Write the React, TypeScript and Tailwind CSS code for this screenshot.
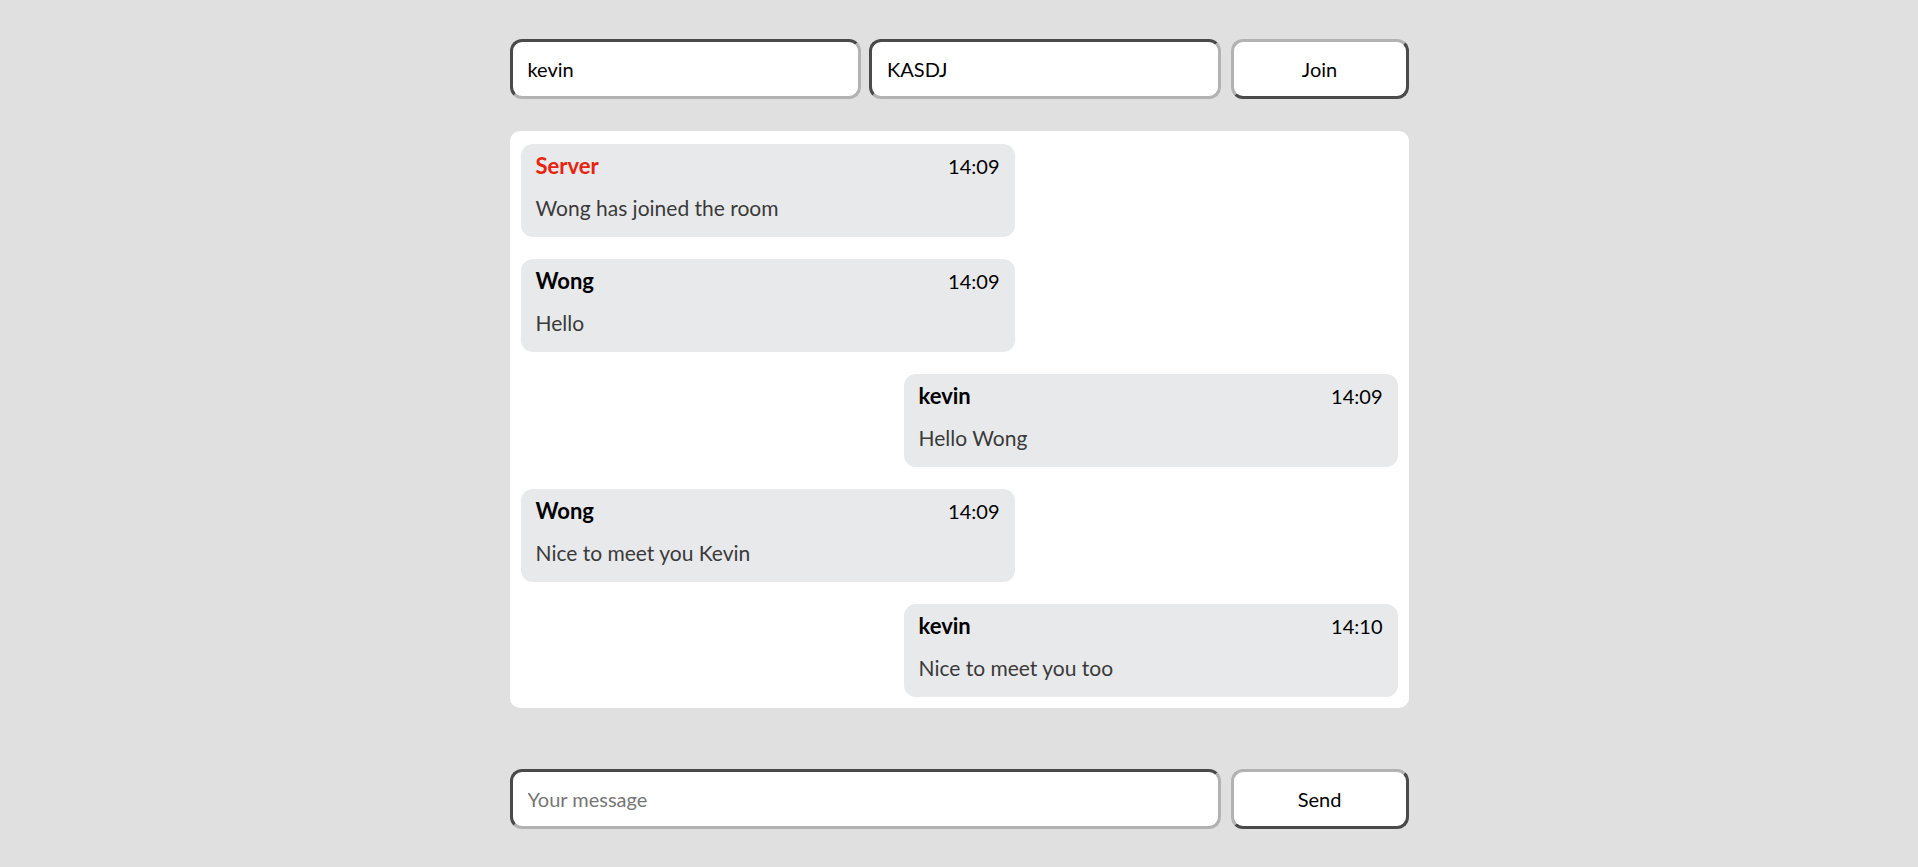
import React from "react";

type Msg = { author: string; time: string; text: string; mine?: boolean; server?: boolean };

const messages: Msg[] = [
  { author: "Server", time: "14:09", text: "Wong has joined the room", server: true },
  { author: "Wong", time: "14:09", text: "Hello" },
  { author: "kevin", time: "14:09", text: "Hello Wong", mine: true },
  { author: "Wong", time: "14:09", text: "Nice to meet you Kevin" },
  { author: "kevin", time: "14:10", text: "Nice to meet you too", mine: true },
];

const inputCls =
  "h-[60px] rounded-[12px] border-[3px] border-t-[#4a4a4a] border-l-[#4a4a4a] border-b-[#b2b2b2] border-r-[#b2b2b2] bg-white px-[15px] text-[20px] text-black outline-none placeholder:text-[#767676]";
const buttonCls =
  "h-[60px] w-[178px] shrink-0 rounded-[12px] border-[3px] border-t-[#b2b2b2] border-l-[#b2b2b2] border-b-[#4a4a4a] border-r-[#4a4a4a] bg-white text-[20px] text-black";

const Bubble = ({ m }: { m: Msg }) => (
  <div className={`flex ${m.mine ? "justify-end" : "justify-start"}`}>
    <div className="h-[93px] w-[494px] rounded-[12px] bg-[#e8e9eb] px-[15px] pt-[5px]">
      <div className="flex items-center justify-between">
        <span
          className={`text-[22px] font-bold ${m.server ? "text-[#e8230f]" : "text-black"}`}
        >
          {m.author}
        </span>
        <span className="text-[20px] text-black">{m.time}</span>
      </div>
      <p className="mt-[10px] text-[21px] text-[#3a3a3a]">{m.text}</p>
    </div>
  </div>
);

export default function App() {
  return (
    <div
      className="min-h-screen w-full bg-[#e0e0e0]"
      style={{ fontFamily: "Lato, 'Open Sans', sans-serif" }}
    >
      <div className="mx-auto flex w-[899px] flex-col pt-[39px]">
        {/* Join row */}
        <div className="flex gap-2">
          <input className={`${inputCls} min-w-0 flex-1`} defaultValue="kevin" />
          <input className={`${inputCls} min-w-0 flex-1`} defaultValue="KASDJ" />
          <button className={`${buttonCls} ml-[2px]`}>Join</button>
        </div>

        {/* Chat */}
        <div className="mt-[32px] flex h-[577px] flex-col gap-[22px] rounded-[10px] bg-white px-[11px] pt-[13px]">
          {messages.map((m, i) => (
            <Bubble key={i} m={m} />
          ))}
        </div>

        {/* Send row */}
        <div className="mt-[61px] flex gap-[10px]">
          <input className={`${inputCls} min-w-0 flex-1`} placeholder="Your message" />
          <button className={buttonCls}>Send</button>
        </div>
      </div>
    </div>
  );
}
